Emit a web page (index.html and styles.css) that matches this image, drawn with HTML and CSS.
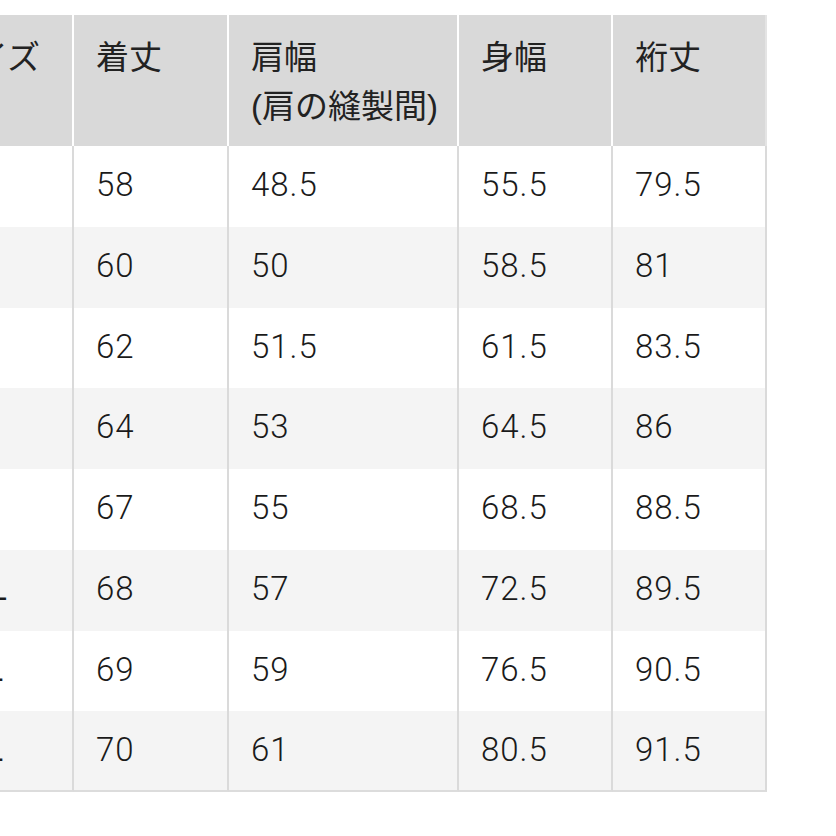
FILE: index.html
```html
<!DOCTYPE html>
<html lang="ja">
<head>
<meta charset="utf-8">
<title>サイズ表</title>
<link rel="stylesheet" href="styles.css">
</head>
<body>
<table class="size-table">
  <colgroup>
    <col class="c-size">
    <col class="c-len">
    <col class="c-shoulder">
    <col class="c-body">
    <col class="c-sleeve">
  </colgroup>
  <thead>
    <tr class="head">
      <th>サイズ</th>
      <th>着丈</th>
      <th>肩幅<br>(肩の縫製間)</th>
      <th>身幅</th>
      <th class="last">裄丈</th>
    </tr>
  </thead>
  <tbody>
    <tr><td class="label">XS</td><td>58</td><td>48.5</td><td>55.5</td><td class="last">79.5</td></tr>
    <tr><td class="label">S</td><td>60</td><td>50</td><td>58.5</td><td class="last">81</td></tr>
    <tr><td class="label">M</td><td>62</td><td>51.5</td><td>61.5</td><td class="last">83.5</td></tr>
    <tr><td class="label">L</td><td>64</td><td>53</td><td>64.5</td><td class="last">86</td></tr>
    <tr><td class="label">XL</td><td>67</td><td>55</td><td>68.5</td><td class="last">88.5</td></tr>
    <tr><td class="label">XXL</td><td>68</td><td>57</td><td>72.5</td><td class="last">89.5</td></tr>
    <tr><td class="label">3XL</td><td>69</td><td>59</td><td>76.5</td><td class="last">90.5</td></tr>
    <tr><td class="label">4XL</td><td>70</td><td>61</td><td>80.5</td><td class="last">91.5</td></tr>
  </tbody>
</table>
</body>
</html>
```

FILE: styles.css
```css
html, body {
  margin: 0;
  background: #ffffff;
}

body {
  padding-top: 15px;
  overflow: hidden;
  font-family: "Liberation Sans", "Noto Sans CJK JP", sans-serif;
  color: #222222;
}

.size-table {
  margin-left: -80px;
  width: 847px;
  table-layout: fixed;
  border-collapse: separate;
  border-spacing: 0;
}

.c-size { width: 154px; }
.c-len { width: 155px; }
.c-shoulder { width: 230px; }
.c-body { width: 154px; }
.c-sleeve { width: 154px; }

.head {
  height: 131px;
}

.size-table th {
  background: #d9d9d9;
  border-right: 2px solid #ffffff;
  padding: 18px 0 0 22px;
  vertical-align: top;
  text-align: left;
  font-weight: 400;
  font-size: 33px;
  line-height: 49px;
  white-space: nowrap;
}

.size-table th.last {
  border-right-color: #e4e4e4;
}

.size-table tbody tr {
  height: 80.75px;
}

.size-table td {
  border-right: 2px solid #dadada;
  padding: 14px 0 0 22px;
  vertical-align: top;
  text-align: left;
  font-family: Roboto, "Liberation Sans", sans-serif;
  font-weight: 300;
  font-size: 33px;
  line-height: 49px;
  letter-spacing: 1px;
  color: #1a1a1a;
  white-space: nowrap;
}

.size-table td.label {
  font-family: "Liberation Sans", sans-serif;
  font-weight: 400;
  font-size: 34px;
  letter-spacing: 0.5px;
}

.size-table tbody tr:nth-child(even) td {
  background: #f4f4f4;
}

.size-table tbody tr:last-child td {
  border-bottom: 2px solid #dcdcdc;
}
```
